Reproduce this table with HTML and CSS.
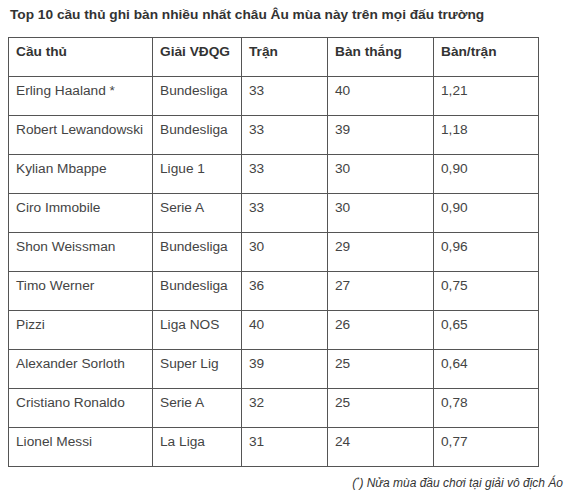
FILE: index.html
```html
<!DOCTYPE html>
<html lang="vi">
<head>
<meta charset="utf-8">
<link rel="stylesheet" href="styles.css">
</head>
<body>
<div class="page">
  <h1 class="title">Top 10 cầu thủ ghi bàn nhiều nhất châu Âu mùa này trên mọi đấu trường</h1>
  <table class="stats">
    <colgroup>
      <col class="c1"><col class="c2"><col class="c3"><col class="c4"><col class="c5">
    </colgroup>
    <thead>
      <tr><th>Cầu thủ</th><th>Giải VĐQG</th><th>Trận</th><th>Bàn thắng</th><th>Bàn/trận</th></tr>
    </thead>
    <tbody>
      <tr><td>Erling Haaland *</td><td>Bundesliga</td><td>33</td><td>40</td><td>1,21</td></tr>
      <tr><td>Robert Lewandowski</td><td>Bundesliga</td><td>33</td><td>39</td><td>1,18</td></tr>
      <tr><td>Kylian Mbappe</td><td>Ligue 1</td><td>33</td><td>30</td><td>0,90</td></tr>
      <tr><td>Ciro Immobile</td><td>Serie A</td><td>33</td><td>30</td><td>0,90</td></tr>
      <tr><td>Shon Weissman</td><td>Bundesliga</td><td>30</td><td>29</td><td>0,96</td></tr>
      <tr><td>Timo Werner</td><td>Bundesliga</td><td>36</td><td>27</td><td>0,75</td></tr>
      <tr><td>Pizzi</td><td>Liga NOS</td><td>40</td><td>26</td><td>0,65</td></tr>
      <tr><td>Alexander Sorloth</td><td>Super Lig</td><td>39</td><td>25</td><td>0,64</td></tr>
      <tr><td>Cristiano Ronaldo</td><td>Serie A</td><td>32</td><td>25</td><td>0,78</td></tr>
      <tr><td>Lionel Messi</td><td>La Liga</td><td>31</td><td>24</td><td>0,77</td></tr>
    </tbody>
  </table>
  <p class="note">(<sup>*</sup>) Nửa mùa đầu chơi tại giải vô địch Áo</p>
</div>
</body>
</html>
```

FILE: styles.css
```css
html, body {
  margin: 0;
  padding: 0;
  background: #ffffff;
}
.page {
  width: 580px;
  font-family: "Liberation Sans", Arial, sans-serif;
  color: #333333;
}
.title {
  margin: 0;
  padding: 6px 0 0 10px;
  font-size: 13.7px;
  line-height: 17px;
  font-weight: bold;
  color: #333333;
  height: 37px;
  box-sizing: border-box;
}
.stats {
  margin-left: 8px;
  border-collapse: collapse;
  table-layout: fixed;
  width: 530px;
  font-size: 13.7px;
  line-height: 16px;
}
.c1 { width: 144px; }
.c2 { width: 89px; }
.c3 { width: 86px; }
.c4 { width: 106px; }
.c5 { width: 105px; }
.stats th, .stats td {
  border: 1px solid #555555;
  padding: 6px 7px 16px 7px;
  text-align: left;
  vertical-align: top;
  font-weight: normal;
  color: #444444;
  white-space: nowrap;
  height: 16px;
}
.stats th {
  font-weight: bold;
  color: #333333;
}
.note {
  margin: 0;
  padding: 8px 17px 0 0;
  text-align: right;
  font-style: italic;
  font-size: 12px;
  line-height: 16px;
  color: #333333;
}
.note sup {
  font-size: 8px;
  line-height: 0;
}
```
